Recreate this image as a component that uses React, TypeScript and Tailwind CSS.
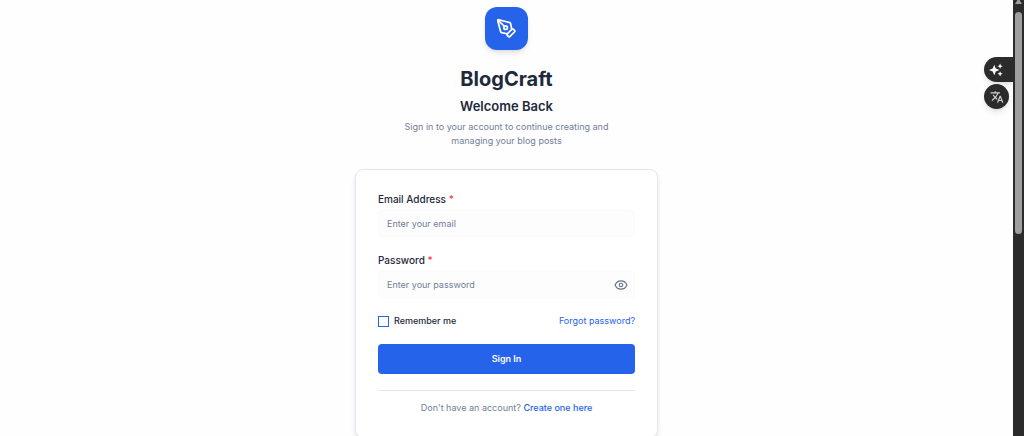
import React, { useState } from "react";
import { Eye, PenTool } from "lucide-react";

function Header() {
  return (
    <header className="flex flex-col items-center text-center">
      <div className="flex size-[43px] items-center justify-center rounded-xl bg-[#2563eb] shadow-md">
        <PenTool className="size-[21px] text-white" strokeWidth={2} />
      </div>
      <h1 className="mt-4 text-[20px] leading-[26px] font-bold text-[#1e293b]">
        BlogCraft
      </h1>
      <h2 className="mt-1 text-[13px] leading-5 font-semibold text-[#1e293b]">
        Welcome Back
      </h2>
      <p className="mt-1 max-w-[216px] text-[9px] leading-[14px] text-[#718096]">
        Sign in to your account to continue creating and managing your blog
        posts
      </p>
    </header>
  );
}

function LoginForm() {
  const [showPassword, setShowPassword] = useState(false);

  return (
    <form
      onSubmit={(e) => e.preventDefault()}
      className="mt-[21px] w-full rounded-lg border border-[#e2e8f0] bg-white p-[22px] text-[9px] leading-[14px] shadow-md"
    >
      <label htmlFor="email" className="block text-[10px] leading-[14px] font-medium text-[#1e293b]">
        Email Address <span className="text-[#ef4444]">*</span>
      </label>
      <input
        id="email"
        type="email"
        placeholder="Enter your email"
        className="mt-1 block h-[27px] w-full rounded border border-[#fafafa] bg-[#fdfdfd] px-2 placeholder:text-[#718096]"
      />

      <label htmlFor="password" className="mt-4 block text-[10px] leading-[14px] font-medium text-[#1e293b]">
        Password <span className="text-[#ef4444]">*</span>
      </label>
      <div className="relative mt-1">
        <input
          id="password"
          type={showPassword ? "text" : "password"}
          placeholder="Enter your password"
          className="block h-[27px] w-full rounded border border-[#fafafa] bg-[#fdfdfd] pr-8 pl-2 placeholder:text-[#718096]"
        />
        <button
          type="button"
          aria-label="Show password"
          onClick={() => setShowPassword(!showPassword)}
          className="absolute inset-y-0 right-[7px] flex items-center text-[#64748b]"
        >
          <Eye className="size-[14px]" />
        </button>
      </div>

      <div className="mt-4 flex items-center justify-between">
        <div className="flex items-center gap-[5px]">
          <input
            id="remember"
            type="checkbox"
            className="size-[11px] appearance-none border border-[#2563eb] bg-white checked:bg-[#2563eb]"
          />
          <label htmlFor="remember" className="font-medium text-[#1e293b]">
            Remember me
          </label>
        </div>
        <a href="#forgot" className="text-[#2563eb]">
          Forgot password?
        </a>
      </div>

      <button
        type="submit"
        className="mt-4 block h-[30px] w-full rounded bg-[#2563eb] font-semibold text-white"
      >
        Sign In
      </button>

      <p className="mt-4 border-t border-[#e2e8f0] pt-[10px] text-center text-[#718096]">
        Don't have an account?{" "}
        <a href="#register" className="font-medium text-[#2563eb]">
          Create one here
        </a>
      </p>
    </form>
  );
}

function SideTools() {
  return (
    <div className="fixed top-[57px] right-[11px] flex w-[29px] flex-col gap-[2px]">
      <button
        aria-label="Assistant"
        className="flex h-[25px] w-full items-center rounded-l-full bg-[#2b2b2b] pl-[5px] text-white shadow-md"
      >
        <svg viewBox="0 0 24 24" className="size-[14px]" fill="currentColor">
          <path d="M9 3l2.600 6.400L18 12l-6.400 2.600L9 21l-2.600-6.400L0 12l6.400-2.600z" />
          <path d="M19 1l1.400 3.100L23.500 5.500l-3.100 1.400L19 10l-1.400-3.100L14.500 5.500l3.100-1.400z" />
          <path d="M19 14l1.400 3.100 3.100 1.400-3.100 1.400L19 23l-1.400-3.100-3.100-1.400 3.100-1.400z" />
        </svg>
      </button>
      <button
        aria-label="Translate"
        className="flex size-[25px] items-center justify-center rounded-full bg-[#2b2b2b] text-[#d4d4d4] shadow-md"
      >
        <svg viewBox="0 0 24 24" className="size-[14px]" fill="currentColor">
          <path d="M12.870 15.070l-2.540-2.510.03-.03A17.520 17.520 0 0 0 14.070 6H17V4h-7V2H8v2H1v1.990h11.170C11.500 7.920 10.440 9.750 9 11.350 8.070 10.320 7.300 9.190 6.690 8h-2c.73 1.630 1.730 3.170 2.980 4.560l-5.090 5.020L4 19l5-5 3.110 3.110.76-2.040zM18.500 10h-2L12 22h2l1.120-3h4.750L21 22h2l-4.500-12zm-2.620 7l1.620-4.330L19.120 17h-3.240z" />
        </svg>
      </button>
    </div>
  );
}

function ScrollRail() {
  return (
    <div className="fixed inset-y-0 right-0 flex w-[11px] flex-col items-center bg-[#2b2b2b]" aria-hidden="true">
      <svg viewBox="0 0 7 4" className="mb-2 h-1 w-[7px] shrink-0 fill-[#9f9f9f]">
        <path d="M2.500 0h2L7 4H0z" />
      </svg>
      <div className="h-[222px] w-[7px] rounded-full bg-[#9f9f9f]" />
    </div>
  );
}

export default function App() {
  return (
    <div className="h-screen overflow-hidden bg-[#fefefe] pr-[11px] font-[Inter,sans-serif]">
      <main className="mx-auto w-full max-w-[303px] pt-[7px]">
        <Header />
        <LoginForm />
      </main>
      <SideTools />
      <ScrollRail />
    </div>
  );
}
